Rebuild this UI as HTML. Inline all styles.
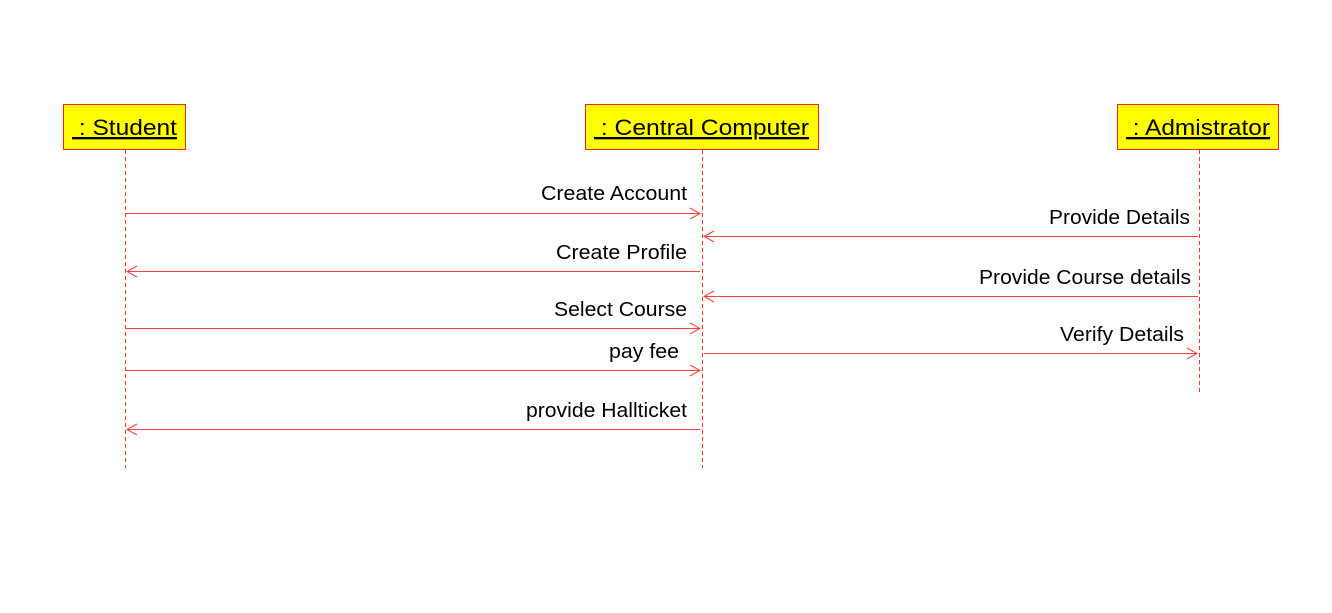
<!DOCTYPE html><html><head><style>body{margin:0;background:#fff}</style></head><body>
<svg width="1332" height="608" xmlns="http://www.w3.org/2000/svg" font-family="Liberation Sans, sans-serif">
<rect width="1332" height="608" fill="#fff"/>
<g fill="#ffff00" stroke="#ff2020" stroke-width="1">
<rect x="63.5" y="104.5" width="122" height="45"/>
<rect x="585.5" y="104.5" width="233" height="45"/>
<rect x="1117.5" y="104.5" width="161" height="45"/>
</g>
<g font-size="22" fill="#000" text-decoration="underline">
<text x="72" y="135" textLength="105" lengthAdjust="spacingAndGlyphs" text-decoration="underline">&#160;: Student</text>
<text x="594" y="135" textLength="215" lengthAdjust="spacingAndGlyphs" text-decoration="underline">&#160;: Central Computer</text>
<text x="1126" y="135" textLength="144" lengthAdjust="spacingAndGlyphs" text-decoration="underline">&#160;: Admistrator</text>
</g>
<g stroke="#ff3030" stroke-dasharray="4,3" stroke-width="1">
<line x1="125.5" y1="150" x2="125.5" y2="468"/>
<line x1="702.5" y1="150" x2="702.5" y2="468"/>
<line x1="1199.5" y1="150" x2="1199.5" y2="392"/>
</g>
<g stroke="#ff4040" stroke-width="1" fill="none">
<line x1="126" y1="213.5" x2="700" y2="213.5"/><polyline points="690,208 700,213.5 690,219"/>
<line x1="1198" y1="236.5" x2="704" y2="236.5"/><polyline points="714,231 704,236.5 714,242"/>
<line x1="700" y1="271.5" x2="127" y2="271.5"/><polyline points="137,266 127,271.5 137,277"/>
<line x1="1198" y1="296.5" x2="704" y2="296.5"/><polyline points="714,291 704,296.5 714,302"/>
<line x1="126" y1="328.5" x2="700" y2="328.5"/><polyline points="690,323 700,328.5 690,334"/>
<line x1="704" y1="353.5" x2="1197" y2="353.5"/><polyline points="1187,348 1197,353.5 1187,359"/>
<line x1="126" y1="370.5" x2="700" y2="370.5"/><polyline points="690,365 700,370.5 690,376"/>
<line x1="700" y1="429.5" x2="127" y2="429.5"/><polyline points="137,424 127,429.5 137,435"/>
</g>
<g font-size="20" fill="#000" lengthAdjust="spacingAndGlyphs">
<text x="541" y="200" textLength="146" lengthAdjust="spacingAndGlyphs">Create Account</text>
<text x="1049" y="224" textLength="141" lengthAdjust="spacingAndGlyphs">Provide Details</text>
<text x="556" y="259" textLength="131" lengthAdjust="spacingAndGlyphs">Create Profile</text>
<text x="979" y="284" textLength="212" lengthAdjust="spacingAndGlyphs">Provide Course details</text>
<text x="554" y="316" textLength="133" lengthAdjust="spacingAndGlyphs">Select Course</text>
<text x="1060" y="341" textLength="124" lengthAdjust="spacingAndGlyphs">Verify Details</text>
<text x="609" y="358" textLength="70" lengthAdjust="spacingAndGlyphs">pay fee</text>
<text x="526" y="417" textLength="161" lengthAdjust="spacingAndGlyphs">provide Hallticket</text>
</g>
</svg>
</body></html>
